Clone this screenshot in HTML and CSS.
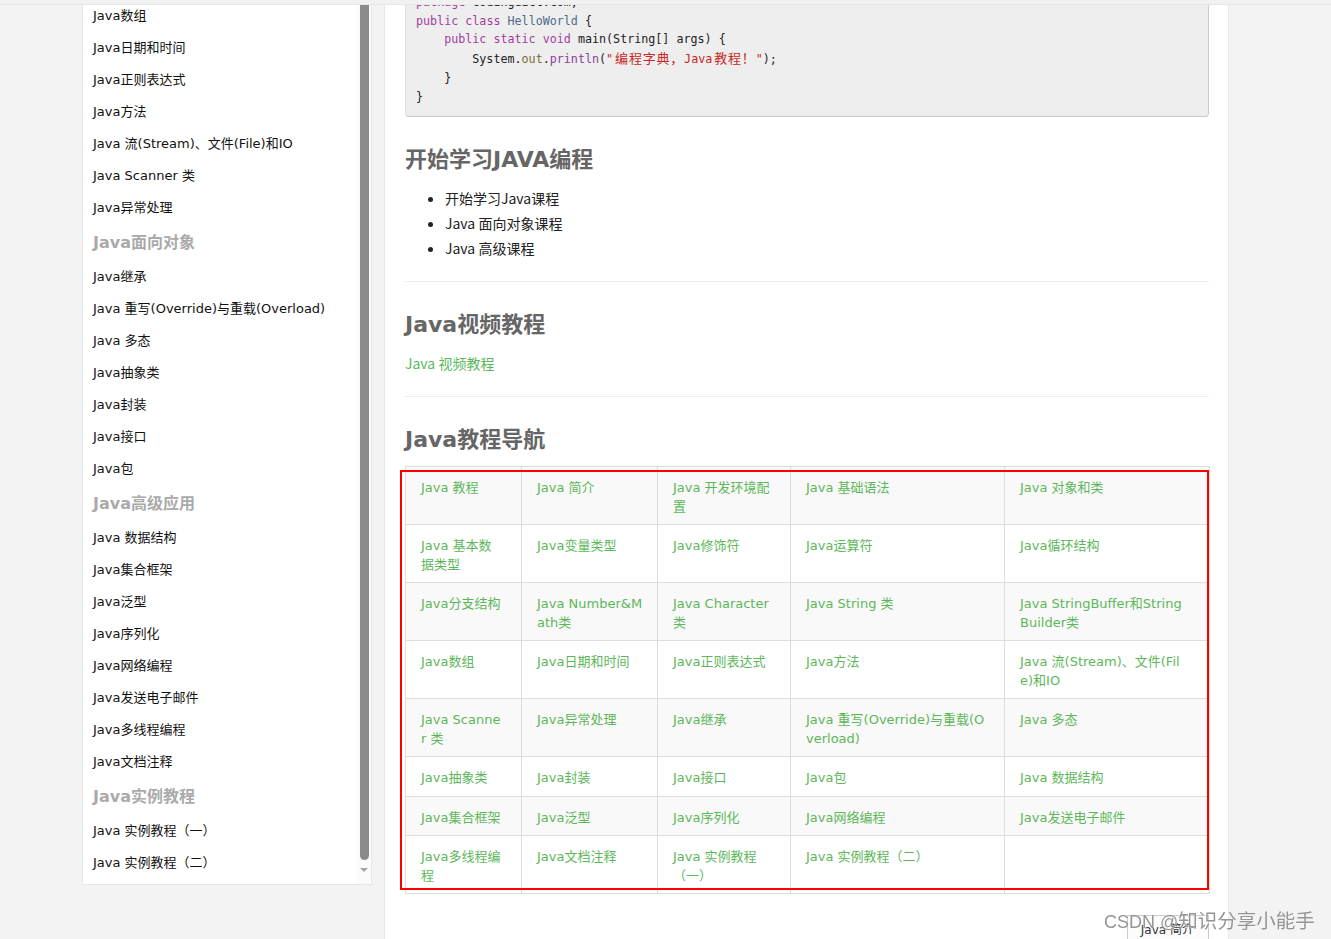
FILE: index.html
```html
<!DOCTYPE html>
<html lang="zh-CN">
<head>
<meta charset="utf-8">
<title>Java 教程</title>
<link rel="stylesheet" href="styles.css">
</head>
<body>
<div class="topbar"></div>
<div class="page">
  <aside class="sidebar">
    <ul class="side-list">
      <li>Java数组</li>
      <li>Java日期和时间</li>
      <li>Java正则表达式</li>
      <li>Java方法</li>
      <li>Java 流(Stream)、文件(File)和IO</li>
      <li>Java Scanner 类</li>
      <li>Java异常处理</li>
      <li class="group">Java面向对象</li>
      <li>Java继承</li>
      <li>Java 重写(Override)与重载(Overload)</li>
      <li>Java 多态</li>
      <li>Java抽象类</li>
      <li>Java封装</li>
      <li>Java接口</li>
      <li>Java包</li>
      <li class="group">Java高级应用</li>
      <li>Java 数据结构</li>
      <li>Java集合框架</li>
      <li>Java泛型</li>
      <li>Java序列化</li>
      <li>Java网络编程</li>
      <li>Java发送电子邮件</li>
      <li>Java多线程编程</li>
      <li>Java文档注释</li>
      <li class="group">Java实例教程</li>
      <li>Java 实例教程（一）</li>
      <li>Java 实例教程（二）</li>
    </ul>
    <div class="scrollbar">
      <div class="thumb"></div>
      <div class="arrow"></div>
    </div>
  </aside>

  <main class="main">
<pre class="code"><span class="kw">package</span> codingdict.com;
<span class="kw">public</span> <span class="kw">class</span> <span class="typ">HelloWorld</span> {
    <span class="kw">public</span> <span class="kw">static</span> <span class="kw">void</span> main(String[] args) {
        System.<span class="fld">out</span>.<span class="fn">println</span>(<span class="str">"<span class="zh">编程字典，</span>Java<span class="zh">教程！</span>"</span>);
    }
}</pre>

    <h2 class="title first">开始学习JAVA编程</h2>
    <ul class="bullets">
      <li>开始学习Java课程</li>
      <li>Java 面向对象课程</li>
      <li>Java 高级课程</li>
    </ul>
    <hr class="sep">

    <h2 class="title">Java视频教程</h2>
    <p class="video"><a class="link" href="#">Java 视频教程</a></p>
    <hr class="sep">

    <h2 class="title">Java教程导航</h2>
    <div class="nav-wrap">
      <table class="nav">
        <colgroup>
          <col class="c1"><col class="c2"><col class="c3"><col class="c4"><col class="c5">
        </colgroup>
        <tr>
          <td>Java 教程</td>
          <td>Java 简介</td>
          <td>Java 开发环境配<br>置</td>
          <td>Java 基础语法</td>
          <td>Java 对象和类</td>
        </tr>
        <tr>
          <td>Java 基本数<br>据类型</td>
          <td>Java变量类型</td>
          <td>Java修饰符</td>
          <td>Java运算符</td>
          <td>Java循环结构</td>
        </tr>
        <tr>
          <td>Java分支结构</td>
          <td>Java Number&amp;M<br>ath类</td>
          <td>Java Character<br>类</td>
          <td>Java String 类</td>
          <td>Java StringBuffer和String<br>Builder类</td>
        </tr>
        <tr>
          <td>Java数组</td>
          <td>Java日期和时间</td>
          <td>Java正则表达式</td>
          <td>Java方法</td>
          <td>Java 流(Stream)、文件(Fil<br>e)和IO</td>
        </tr>
        <tr>
          <td>Java Scanne<br>r 类</td>
          <td>Java异常处理</td>
          <td>Java继承</td>
          <td>Java 重写(Override)与重载(O<br>verload)</td>
          <td>Java 多态</td>
        </tr>
        <tr>
          <td>Java抽象类</td>
          <td>Java封装</td>
          <td>Java接口</td>
          <td>Java包</td>
          <td>Java 数据结构</td>
        </tr>
        <tr>
          <td>Java集合框架</td>
          <td>Java泛型</td>
          <td>Java序列化</td>
          <td>Java网络编程</td>
          <td>Java发送电子邮件</td>
        </tr>
        <tr>
          <td>Java多线程编<br>程</td>
          <td>Java文档注释</td>
          <td>Java 实例教程<br>（一）</td>
          <td>Java 实例教程（二）</td>
          <td></td>
        </tr>
      </table>
      <div class="mark"></div>
    </div>

    <div class="pager">
      <a class="next" href="#">Java 简介</a>
    </div>
  </main>
</div>
<div class="watermark"><span class="wm-latin">CSDN @</span><span class="wm-cjk">知识分享小能手</span></div>
</body>
</html>
```

FILE: styles.css
```css
* { box-sizing: border-box; }

html, body {
  margin: 0;
  height: 100%;
}

body {
  background: #f3f3f3;
  font-family: "DejaVu Sans", "Noto Sans CJK SC", sans-serif;
  overflow: hidden;
}

.topbar {
  position: fixed;
  top: 0;
  left: 0;
  right: 0;
  height: 5px;
  background: #f1f1f1;
  border-bottom: 1px solid #e6e6e6;
  z-index: 5;
}

.page {
  display: flex;
  align-items: flex-start;
  gap: 12px;
  padding-left: 82px;
  height: 939px;
}

/* ---------- sidebar ---------- */
.sidebar {
  width: 290px;
  height: 885px;
  background: #fff;
  border: 1px solid #e4e8ee;
  border-top: 0;
  display: flex;
  overflow: hidden;
}

.side-list {
  flex: 1;
  list-style: none;
  margin: 0;
  padding: 0 0 0 10px;
}

.side-list li {
  height: 32px;
  line-height: 32px;
  font-size: 13px;
  color: #111;
  white-space: nowrap;
}

.side-list li.group {
  height: 37px;
  line-height: 37px;
  font-size: 16px;
  font-weight: bold;
  color: #aaa;
}

.scrollbar {
  width: 14px;
  background: #fbfbfb;
  display: flex;
  flex-direction: column;
  align-items: center;
}

.thumb {
  width: 9px;
  height: 860px;
  background: #8b8b8b;
  border-radius: 0 0 5px 5px;
}

.arrow {
  margin-top: 8px;
  width: 0;
  height: 0;
  border-left: 4px solid transparent;
  border-right: 4px solid transparent;
  border-top: 4px solid #a5a5a5;
}

/* ---------- main ---------- */
.main {
  width: 845px;
  height: 939px;
  background: #fff;
  border-left: 1px solid #e3e8ef;
  border-right: 1px solid #e6eaef;
  padding: 0 19px 0 20px;
}

.code {
  margin: -18px 0 0;
  padding: 10px;
  background: #eee;
  border: 1px solid #e0e0e0;
  border-right-color: #cbcbcb;
  border-bottom-color: #c8c8c8;
  border-radius: 0 0 4px 4px;
  font-family: "DejaVu Sans Mono", "Noto Sans CJK SC", monospace;
  font-size: 11.7px;
  line-height: 18.7px;
  color: #222;
}

.code .kw { color: #a33ea1; }
.code .typ { color: #4f6b85; }
.code .fld { color: #7a6a36; }
.code .fn { color: #8a3f9a; }
.code .str { color: #c8261e; }

.code .zh {
  font-family: "Noto Sans CJK SC", sans-serif;
  font-size: 13px;
  letter-spacing: 0.8px;
  margin-left: 2px;
}

.title {
  margin: 0 0 12px;
  padding-top: 2px;
  font-size: 22px;
  line-height: 28px;
  font-weight: bold;
  color: #666;
}

.title.first { margin-top: 27px; }

.bullets {
  margin: 0;
  padding-left: 40px;
  font-family: "Noto Sans CJK SC", sans-serif;
  font-size: 14px;
  line-height: 25px;
  color: #222;
}

.sep {
  margin: 20px 0 27px;
  border: 0;
  border-top: 1px solid #eee;
  height: 0;
}

.video {
  margin: 0;
  font-family: "Noto Sans CJK SC", sans-serif;
  font-size: 14px;
  line-height: 25px;
}

.link {
  color: #5cb85c;
  text-decoration: none;
}

/* ---------- nav table ---------- */
.nav-wrap {
  position: relative;
  margin-top: 12px;
}

.nav {
  width: 100%;
  border-collapse: collapse;
  table-layout: fixed;
  font-size: 13px;
}

.nav .c1 { width: 116px; }
.nav .c2 { width: 136px; }
.nav .c3 { width: 133px; }
.nav .c4 { width: 214px; }
.nav .c5 { width: 205px; }

.nav td {
  border: 1px solid #ddd;
  padding: 12px 15px 8px;
  line-height: 18.5px;
  vertical-align: top;
  white-space: nowrap;
  color: #5db75a;
}

.nav tr:nth-child(odd) td { background: #f9f9f9; }

.mark {
  position: absolute;
  left: -5px;
  top: 4px;
  right: 0;
  bottom: 4px;
  border: 2px solid #f00;
  pointer-events: none;
}

.pager {
  display: flex;
  justify-content: flex-end;
  margin-top: 21px;
}

.next {
  border: 1px solid #ccc;
  background: #fcfcfc;
  padding: 5px 14px 5px 13px;
  font-size: 12px;
  line-height: 18px;
  color: #333;
  text-decoration: none;
}

.watermark {
  position: fixed;
  left: 1104px;
  top: 905px;
  color: rgba(130, 130, 130, 0.85);
  text-shadow: 0 0 1px #fff;
  white-space: nowrap;
  font-family: "Liberation Sans", "Noto Sans CJK SC", sans-serif;
  z-index: 6;
}

.wm-latin { font-size: 18px; }

.wm-cjk {
  font-family: "Noto Sans CJK SC", sans-serif;
  font-size: 19.5px;
}
```
